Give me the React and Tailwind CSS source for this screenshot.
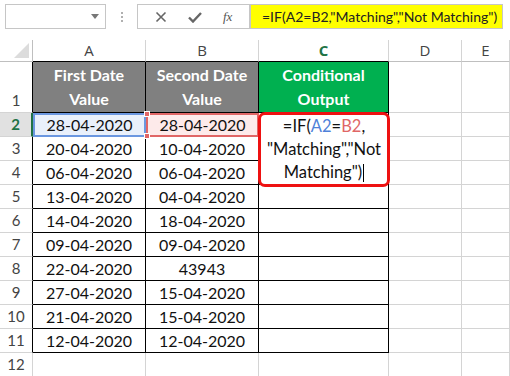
import React from "react";

const rows = [
  ["28-04-2020", "28-04-2020"],
  ["20-04-2020", "10-04-2020"],
  ["06-04-2020", "06-04-2020"],
  ["13-04-2020", "04-04-2020"],
  ["14-04-2020", "18-04-2020"],
  ["09-04-2020", "09-04-2020"],
  ["22-04-2020", "43943"],
  ["27-04-2020", "15-04-2020"],
  ["21-04-2020", "15-04-2020"],
  ["12-04-2020", "12-04-2020"],
];

const cellFont = { fontFamily: "Lato, 'Open Sans', sans-serif" };

function Corner({ className }) {
  return <span className={`absolute w-[6px] h-[6px] bg-[#e06666] border border-white ${className}`} />;
}

function Toolbar() {
  return (
    <div className="h-[40px] flex items-start pt-[4px] pl-[5px] bg-white">
      <div className="w-[101px] h-[25px] border border-[#c6c6c6] flex items-center justify-end pr-[6px]">
        <svg width="8" height="5" viewBox="0 0 8 5"><path d="M0 0h8L4 5z" fill="#777" /></svg>
      </div>
      <div className="w-[31px] h-[25px] flex flex-col items-center justify-center gap-[2px]">
        <span className="w-[2px] h-[2px] bg-[#b0b0b0]" />
        <span className="w-[2px] h-[2px] bg-[#b0b0b0]" />
        <span className="w-[2px] h-[2px] bg-[#b0b0b0]" />
      </div>
      <div className="w-[113px] h-[25px] border border-[#c6c6c6] flex items-center justify-around px-[6px]">
        <svg width="12" height="12" viewBox="0 0 12 12">
          <path d="M1.5 1.5l9 9M10.5 1.5l-9 9" stroke="#666" strokeWidth="1.6" />
        </svg>
        <svg width="14" height="12" viewBox="0 0 14 12">
          <path d="M1 6.5l4 4L13 2" stroke="#666" strokeWidth="2.4" fill="none" />
        </svg>
        <span className="text-[13px] italic text-[#555]" style={{ fontFamily: "'Liberation Serif', serif" }}>
          fx
        </span>
      </div>
      <div
        className="w-[253px] h-[25px] bg-[#ffff00] border border-[#c6c6c6] flex items-center pl-[11px] text-[14px] text-[#222] whitespace-nowrap overflow-hidden"
        style={cellFont}
      >
        =IF(A2=B2,"Matching","Not Matching")
      </div>
    </div>
  );
}

export default function App() {
  const gridLine = "border-r border-b border-[#d4d4d4]";
  const colHead = "flex items-center justify-center text-[15px] text-[#444] border-r border-[#d4d4d4]";
  const rowHead = "flex items-center justify-center text-[15px] text-[#444] border-r border-b";

  return (
    <div className="relative w-[510px] h-[376px] overflow-hidden bg-white" style={{ fontFamily: "'Open Sans', sans-serif" }}>
      <Toolbar />
      <div
        className="grid grid-cols-[33px_113px_113px_130px_73px_1fr] grid-rows-[22px_51px_repeat(11,24px)]"
        style={cellFont}
      >
        {/* column header row */}
        <div className="relative border-r border-b border-[#bfbfbf]">
          <svg className="absolute right-[3px] bottom-[3px]" width="15" height="15" viewBox="0 0 15 15">
            <path d="M15 0V15H0z" fill="#dcdcdc" />
          </svg>
        </div>
        <div className={`${colHead} border-b border-b-black`} style={{ fontFamily: "'Open Sans', sans-serif" }}>A</div>
        <div className={`${colHead} border-b border-b-black`} style={{ fontFamily: "'Open Sans', sans-serif" }}>B</div>
        <div
          className="flex items-center justify-center text-[15px] font-bold text-[#217346] border-r border-[#d4d4d4] border-b border-b-black"
          style={{ fontFamily: "'Open Sans', sans-serif" }}
        >
          C
        </div>
        <div className={`${colHead} border-b border-b-[#bfbfbf]`} style={{ fontFamily: "'Open Sans', sans-serif" }}>D</div>
        <div className={`${colHead} border-b border-b-[#bfbfbf]`} style={{ fontFamily: "'Open Sans', sans-serif" }}>E</div>

        {/* row 1 */}
        <div className="flex items-end justify-center pb-[1px] text-[15px] text-[#444] border-r border-r-black border-b border-b-[#d4d4d4]">1</div>
        <div className="flex flex-col items-center justify-center bg-[#808080] text-white font-bold text-[16px] leading-[24px] border-r border-b border-black">
          <span>First Date</span>
          <span>Value</span>
        </div>
        <div className="flex flex-col items-center justify-center bg-[#808080] text-white font-bold text-[16px] leading-[24px] border-r border-b border-black">
          <span>Second Date</span>
          <span>Value</span>
        </div>
        <div className="flex flex-col items-center justify-center bg-[#00b050] text-white font-bold text-[16px] leading-[24px] border-r border-b border-black">
          <span>Conditional</span>
          <span>Output</span>
        </div>
        <div className={gridLine} />
        <div className={gridLine} />

        {rows.map((r, i) => {
          const n = i + 2;
          const sel = n === 2;
          return (
            <React.Fragment key={n}>
              <div
                className={
                  sel
                    ? "flex items-center justify-center text-[15px] font-bold text-[#217346] bg-[#e1e1e1] border-b border-b-[#d4d4d4] border-r-2 border-r-[#217346]"
                    : `${rowHead} border-r-black border-b-[#d4d4d4]`
                }
              >
                {n}
              </div>
              <div
                className={
                  sel
                    ? "flex items-center justify-center text-[16px] text-[#111] bg-[#e9f0fb] border-2 border-[#6b97e0]"
                    : "flex items-center justify-center text-[16px] text-[#111] border-r border-b border-black"
                }
              >
                {r[0]}
              </div>
              <div
                className={
                  sel
                    ? "relative flex items-center justify-center text-[16px] text-[#111] bg-[#fdeaea] border-2 border-[#e06666]"
                    : "flex items-center justify-center text-[16px] text-[#111] border-r border-b border-black"
                }
              >
                {r[1]}
                {sel && (
                  <>
                    <Corner className="-left-[4px] -top-[4px]" />
                    <Corner className="-left-[4px] -bottom-[4px]" />
                  </>
                )}
              </div>
              <div className="border-r border-b border-black" />
              <div className={gridLine} />
              <div className={gridLine} />
            </React.Fragment>
          );
        })}

        {/* row 12 */}
        <div className={`${rowHead} border-[#d4d4d4]`}>12</div>
        <div className={gridLine} />
        <div className={gridLine} />
        <div className={gridLine} />
        <div className={gridLine} />
        <div className={gridLine} />
      </div>

      {/* in-cell formula editor with annotation box */}
      <div
        className="absolute left-[258px] top-[112px] w-[132px] h-[75px] bg-white border-[3px] border-[#ee1111] rounded-[7px] flex flex-col items-center justify-center text-[16.5px] leading-[23px] text-[#111]"
        style={cellFont}
      >
        <span>
          =IF(<span className="text-[#4f81d9]">A2</span>=<span className="text-[#e06666]">B2</span>,
        </span>
        <span className="whitespace-nowrap">"Matching","Not</span>
        <span className="flex items-center">
          Matching")<span className="inline-block w-[1px] h-[18px] bg-black ml-[1px]" />
        </span>
      </div>
    </div>
  );
}
